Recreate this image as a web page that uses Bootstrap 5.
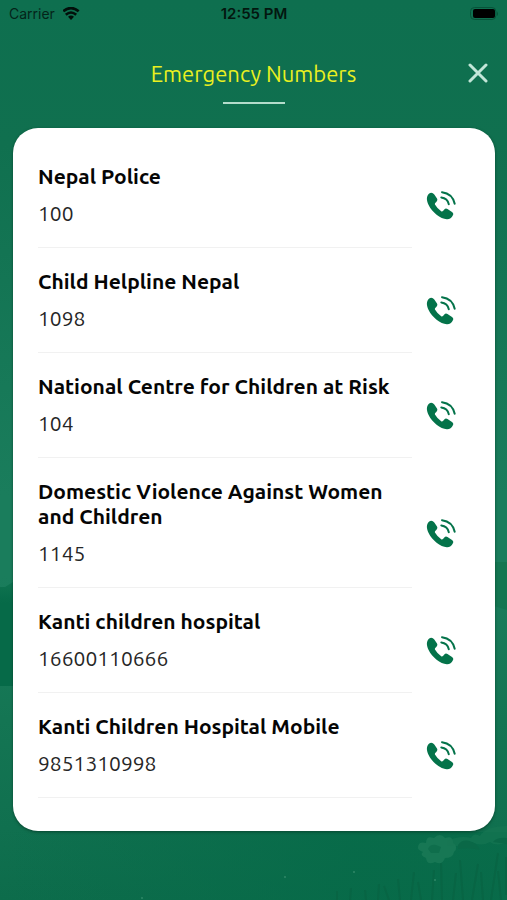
<!DOCTYPE html>
<html lang="en">
<head>
<meta charset="utf-8">
<meta name="viewport" content="width=device-width, initial-scale=1">
<title>Emergency Numbers</title>
<link href="https://cdn.jsdelivr.net/npm/bootstrap@5.3.0/dist/css/bootstrap.min.css" rel="stylesheet">
<style>
  body { font-family: Ubuntu, "Noto Sans", sans-serif; background: #10704f; }
  .screen { background: linear-gradient(180deg, #0e6f4f 0, #10704f 16%, #1a7d5c 55%, #1a7d5c 64%, #147553 80%, #10704f 92%, #0d6c4b 100%); }
  .scenery { z-index: 0; }
  .status-bar { height: 28px; padding: 0 8px 0 9px; font-family: Inter, sans-serif; font-size: 14px; line-height: 28px; color: #042419; }
  .status-time { font-weight: 600; font-size: 15px; color: #03170f; }
  .page-head { height: 100px; padding-top: 31px; }
  .page-title { font-size: 22px; line-height: 30px; font-weight: 450; color: #eaf01f; }
  .title-rule { width: 62px; height: 2px; background: #b4dccb; margin-top: 13px; }
  .close-btn { right: 15px; top: 31px; width: 28px; height: 28px; color: #c2e6d8; }
  .contacts { margin: 0 12px 0 13px; padding: 15px 24px 33px 25px; border-radius: 25px; box-shadow: 0 1px 3px rgba(0, 40, 25, .6); }
  .contact { padding-top: 21px; }
  .contact-text { padding-bottom: 22px; border-bottom: 1px solid #f1f1f1; }
  .contact-name { font-size: 21px; line-height: 25px; font-weight: 700; color: #050505; margin-bottom: 12px; }
  .contact-number { font-size: 21px; line-height: 24px; color: #262626; }
  .call-link { width: 30px; margin: 0 15px 0 14px; color: #04734a; }
</style>
</head>
<body>
<div class="screen position-relative min-vh-100 overflow-hidden">
  <svg class="scenery position-absolute bottom-0 start-0 w-100" height="400" viewBox="0 0 507 400" preserveAspectRatio="xMidYMax slice" aria-hidden="true">
    <defs>
      <linearGradient id="dusk" x1="0" y1="0" x2="1" y2="0">
        <stop offset="0" stop-color="#066a48" stop-opacity="0"/>
        <stop offset=".7" stop-color="#066a48" stop-opacity=".8"/>
        <stop offset="1" stop-color="#066a48" stop-opacity=".7"/>
      </linearGradient>
      <linearGradient id="hill" x1="0" y1="0" x2="0" y2="1">
        <stop offset="0" stop-color="#0f7350"/>
        <stop offset=".2" stop-color="#066a48"/>
        <stop offset="1" stop-color="#066a48"/>
      </linearGradient>
    </defs>
    <path d="M0 87l5 0 8-5v104H0z" fill="url(#hill)"/>
    <path d="M494 62h13v48l-13-4z" fill="#13744f" opacity=".8"/>
    <path d="M0 332h507v68H0z" fill="url(#dusk)"/>
    <g fill="#177754">
      <path d="M418 348q0-7 8-5 0-8 8-5 6-6 11 0 8-3 8 5 6 4 1 9-1 6-9 6-3 8-10 4-8 4-9-4-7-3-3-6-5-2-5-4z"/>
      <path d="M447 341q13-6 24-3 3-6 9-2 6-10 27-10v16q-10 5-17 0-9 5-18 0-12 6-25 3z" opacity=".6"/>
    </g>
    <path d="M428 349q2-5 8-4l5 2-2 6h-8z" fill="#0f6e4c"/>
    <path d="M458 345q5-7 14-3 5 2 8 8-10-3-22-1zM493 342q4-5 14-4v6z" fill="#0a6847"/>
    <g fill="none" stroke="#075f40" stroke-width="2" opacity=".5">
      <path d="M337 400v-9M350 400l1-12M366 400l-1-10M378 400l1-16M389 400l-5-14M400 400l-2-21M411 400l3-28M421 400l-3-18M432 400l2-30M442 400l-1-37M453 400l3-27M463 400l-3-40M472 400l6-36M483 400l-2-28M491 400l7-47M501 400l-3-29M506 395v-38"/>
    </g>
    <g fill="#2f8767"><circle cx="285" cy="377" r="1"/><circle cx="354" cy="372" r="1"/><circle cx="435" cy="380" r="1"/><circle cx="142" cy="398" r="1"/></g>
  </svg>

  <div class="position-relative">
    <div class="status-bar d-flex align-items-center">
      <div class="col d-flex align-items-center">
        <span>Carrier</span>
        <svg class="ms-2" width="18" height="15" viewBox="2 1 18 15" fill="none" stroke="#020f0a" stroke-width="2.6" role="img" aria-label="Wi-Fi">
          <path d="M2.300 5.300q7.700-6.500 15.400 0M4.800 8.700q5.200-4.400 10.400 0"/>
          <path d="M7 10.800q3-2.500 6 0L10 14z" fill="#020f0a" stroke="none"/>
        </svg>
      </div>
      <div class="status-time">12:55 PM</div>
      <div class="col d-flex justify-content-end">
        <svg width="30" height="15" viewBox="0 1 30 15" role="img" aria-label="Battery full">
          <rect x="1.500" y="1.500" width="25.400" height="12" rx="4" fill="none" stroke="#075339"/>
          <rect x="4" y="3" width="22" height="9" rx="2" fill="#000"/>
          <path d="M28 5.500q2 2.300 0 4.600z" fill="#075339"/>
        </svg>
      </div>
    </div>

    <header class="page-head position-relative d-flex flex-column align-items-center">
      <h1 class="page-title mb-0">Emergency Numbers</h1>
      <div class="title-rule"></div>
      <button type="button" class="close-btn btn p-0 border-0 position-absolute d-flex align-items-center justify-content-center" aria-label="Close">
        <svg width="20" height="20" viewBox="0 0 20 20" fill="none" stroke="currentColor" stroke-width="3" stroke-linecap="round"><path d="M2 2l16 16M18 2L2 18"/></svg>
      </button>
    </header>

    <svg class="d-none" aria-hidden="true">
      <symbol id="phone" viewBox="0 1 30 30">
        <path fill="currentColor" d="M5.200 2.700Q7 2.700 8.300 4.500L11 8.500Q12 10.300 10.300 12L9.200 13.100Q8.600 13.900 9.100 14.800Q11.400 18.800 15.200 21.200Q16.200 21.700 17 20.900L18.300 19.400Q19.700 18 21.500 19L26 22Q28 23.500 26.900 25.300Q25 29.400 20.800 29.200C14.500 29 6 22.200 2.600 15C-.2 9.500 .7 5.700 3.200 3.500Q4.300 2.700 5.200 2.700Z"/>
        <path fill="none" stroke="currentColor" stroke-width="2" stroke-linecap="round" d="M16 2.200Q26.500 3.500 28.700 13.800M15.300 7.500Q21.500 8.300 22.800 14.200"/>
      </symbol>
    </svg>

    <main class="contacts bg-white">
      <ul class="list-unstyled mb-0">
        <li class="contact d-flex align-items-center">
          <div class="contact-text flex-grow-1"><h2 class="contact-name">Nepal Police</h2><div class="contact-number">100</div></div>
          <a class="call-link flex-shrink-0 d-block" href="tel:100" aria-label="Call Nepal Police"><svg class="d-block" width="30" height="30"><use href="#phone"/></svg></a>
        </li>
        <li class="contact d-flex align-items-center">
          <div class="contact-text flex-grow-1"><h2 class="contact-name">Child Helpline Nepal</h2><div class="contact-number">1098</div></div>
          <a class="call-link flex-shrink-0 d-block" href="tel:1098" aria-label="Call Child Helpline Nepal"><svg class="d-block" width="30" height="30"><use href="#phone"/></svg></a>
        </li>
        <li class="contact d-flex align-items-center">
          <div class="contact-text flex-grow-1"><h2 class="contact-name">National Centre for Children at Risk</h2><div class="contact-number">104</div></div>
          <a class="call-link flex-shrink-0 d-block" href="tel:104" aria-label="Call National Centre for Children at Risk"><svg class="d-block" width="30" height="30"><use href="#phone"/></svg></a>
        </li>
        <li class="contact d-flex align-items-center">
          <div class="contact-text flex-grow-1"><h2 class="contact-name">Domestic Violence Against Women and Children</h2><div class="contact-number">1145</div></div>
          <a class="call-link flex-shrink-0 d-block" href="tel:1145" aria-label="Call Domestic Violence Against Women and Children"><svg class="d-block" width="30" height="30"><use href="#phone"/></svg></a>
        </li>
        <li class="contact d-flex align-items-center">
          <div class="contact-text flex-grow-1"><h2 class="contact-name">Kanti children hospital</h2><div class="contact-number">16600110666</div></div>
          <a class="call-link flex-shrink-0 d-block" href="tel:16600110666" aria-label="Call Kanti children hospital"><svg class="d-block" width="30" height="30"><use href="#phone"/></svg></a>
        </li>
        <li class="contact d-flex align-items-center">
          <div class="contact-text flex-grow-1"><h2 class="contact-name">Kanti Children Hospital Mobile</h2><div class="contact-number">9851310998</div></div>
          <a class="call-link flex-shrink-0 d-block" href="tel:9851310998" aria-label="Call Kanti Children Hospital Mobile"><svg class="d-block" width="30" height="30"><use href="#phone"/></svg></a>
        </li>
      </ul>
    </main>
  </div>
</div>
<script src="https://cdn.jsdelivr.net/npm/bootstrap@5.3.0/dist/js/bootstrap.bundle.min.js"></script>
</body>
</html>
